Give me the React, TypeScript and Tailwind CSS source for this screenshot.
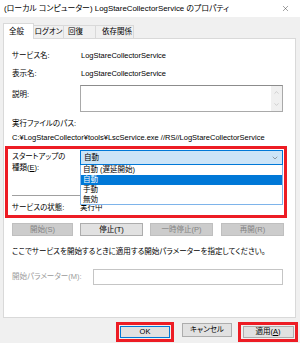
import { ChevronDown, ChevronUp, X } from "lucide-react";

const font = "font-['Liberation_Sans','Noto_Sans_CJK_JP',sans-serif] [font-feature-settings:'palt']";

function Btn({ label, disabled, className = "" }: { label: string; disabled?: boolean; className?: string }) {
  return (
    <div
      className={`h-[13px] flex items-center justify-center border text-[7.5px] leading-none ${
        disabled ? "bg-[#cccccc] border-[#bfbfbf] text-[#838383]" : "bg-[#e1e1e1] border-[#adadad] text-black"
      } ${className}`}
    >
      {label}
    </div>
  );
}

export default function App() {
  return (
    <div className={`w-[300px] h-[343px] bg-[#f0f0f0] flex flex-col text-[7.5px] text-black overflow-hidden whitespace-nowrap ${font}`}>
      {/* Title bar */}
      <div className="h-[17px] bg-white flex items-center justify-between pl-[4px] pr-[10px]">
        <span className="text-[7.9px]">(ローカル コンピューター) LogStareCollectorService のプロパティ</span>
        <X size={9} strokeWidth={1.2} className="text-[#333]" />
      </div>

      {/* Tabs */}
      <div className="flex items-end pl-[3px] mt-[6px] h-[15px]">
        <div className="w-[31px] h-[16px] bg-white border border-b-0 border-[#d9d9d9] flex items-center pl-[5px] -mb-px relative z-10">全般</div>
        <div className="w-[30px] h-[13px] border border-l-0 border-b-0 border-[#d9d9d9] flex items-center justify-center">ログオン</div>
        <div className="w-[32px] h-[13px] border border-l-0 border-b-0 border-[#d9d9d9] flex items-center pl-[4px]">回復</div>
        <div className="w-[38px] h-[13px] border border-l-0 border-b-0 border-[#d9d9d9] flex items-center pl-[6px]">依存関係</div>
      </div>

      {/* Panel */}
      <div className="mx-[3px] w-[293px] h-[280px] bg-white border border-[#d9d9d9] flex flex-col relative">
        <div className="flex items-center h-[10px] mt-[12px] pl-[8px]">
          <span className="w-[69px]">サービス名:</span>
          <span>LogStareCollectorService</span>
        </div>
        <div className="flex items-center h-[10px] mt-[8px] pl-[8px]">
          <span className="w-[69px]">表示名:</span>
          <span>LogStareCollectorService</span>
        </div>
        <div className="flex mt-[6px] pl-[8px]">
          <span className="w-[68px] pt-[4px]">説明:</span>
          <div className="w-[203px] h-[27px] border border-[#a9a9a9] border-t-[#8c8c8c] flex justify-end">
            <div className="w-[11px] bg-[#f0f0f0] flex flex-col items-center justify-between py-[3px] text-[#a6a6a6]">
              <ChevronUp size={7} strokeWidth={1.5} />
              <ChevronDown size={7} strokeWidth={1.5} />
            </div>
          </div>
        </div>
        <div className="h-[10px] flex items-center mt-[7px] pl-[8px]">実行ファイルのパス:</div>
        <div className="h-[10px] flex items-center mt-[4px] pl-[8px]">
          C:¥LogStareCollector¥tools¥LscService.exe //RS//LogStareCollectorService
        </div>

        {/* Startup type section (highlighted) */}
        <div className="ml-[1px] mt-[3px] w-[282px] h-[72px] border-[3px] border-[#ed1c24] relative flex flex-col">
          <div className="flex pl-[4px] pt-[1px]">
            <div className="w-[68px] flex flex-col leading-[11px] pt-[1px]">
              <span>スタートアップの</span>
              <span>種類(<span className="underline">E</span>):</span>
            </div>
            <div className="w-[203px] h-[15px] bg-[#cce4f7] border border-[#0078d7] flex items-center justify-between pl-[3px] pr-[3px]">
              <span>自動</span>
              <ChevronDown size={8} strokeWidth={1.4} className="text-[#444]" />
            </div>
          </div>
          <div className="mx-[4px] mt-[22px] h-px bg-[#a0a0a0]" />
          <div className="flex items-center h-[10px] mt-[7px] pl-[4px]">
            <span className="w-[68px]">サービスの状態:</span>
            <span>実行中</span>
          </div>

          {/* Open dropdown list */}
          <div className="absolute left-[72px] top-[16px] w-[203px] h-[40px] bg-white border border-[#7eb4ea] border-t-0 flex flex-col">
            <div className="h-[10px] flex items-center pl-[2px]">自動 (遅延開始)</div>
            <div className="h-[10px] flex items-center pl-[2px] bg-[#0078d7] text-white">自動</div>
            <div className="h-[10px] flex items-center pl-[2px]">手動</div>
            <div className="h-[9px] flex items-center pl-[2px]">無効</div>
          </div>
        </div>

        <div className="flex mt-[5px] pl-[8px] gap-[7px]">
          <Btn label="開始(S)" disabled className="w-[61px]" />
          <Btn label="停止(T)" className="w-[63px]" />
          <Btn label="一時停止(P)" disabled className="w-[63px]" />
          <Btn label="再開(R)" disabled className="w-[63px] ml-[1px]" />
        </div>

        <div className="h-[10px] flex items-center mt-[11px] pl-[8px]">
          ここでサービスを開始するときに適用する開始パラメーターを指定してください。
        </div>

        <div className="flex items-center mt-[12px] pl-[8px]">
          <span className="w-[81px] text-[#9a9a9a]">開始パラメーター(M):</span>
          <div className="w-[190px] h-[16px] border border-[#c5c5c5]" />
        </div>
      </div>

      {/* Bottom buttons */}
      <div className="flex items-start mt-[4px] pl-[116px]">
        <div className="border-[3px] border-[#ed1c24] w-[58px] h-[20px] flex items-center justify-center">
          <div className="w-[50px] h-[12px] bg-[#e1e1e1] border border-[#0078d7] flex items-center justify-center text-[7.5px]">OK</div>
        </div>
        <div className="ml-[8px] mt-[1px] w-[50px] h-[14px] bg-[#e1e1e1] border border-[#adadad] flex items-center justify-center">キャンセル</div>
        <div className="ml-[6px] border-[3px] border-[#ed1c24] w-[60px] h-[20px] flex items-center justify-center">
          <div className="w-[51px] h-[12px] bg-[#e1e1e1] border border-[#adadad] flex items-center justify-center">適用(<span className="underline">A</span>)</div>
        </div>
      </div>
    </div>
  );
}
